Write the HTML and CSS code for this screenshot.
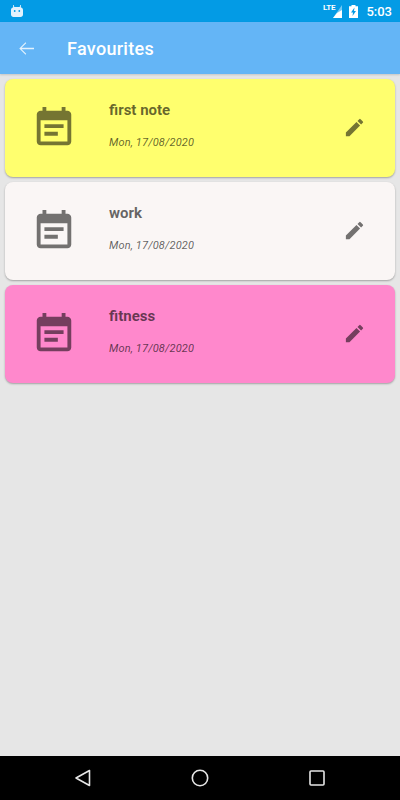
FILE: index.html
```html
<!DOCTYPE html>
<html lang="en">
<head>
<meta charset="utf-8">
<title>Favourites</title>
<link rel="stylesheet" href="styles.css">
</head>
<body>
<div class="screen">
  <div class="status">
    <svg class="status-cat" viewBox="0 0 12 12" width="12" height="12"><path d="M2 0h.7l.6 2h5.400l.6-2H10l-.2 2.200c1.300.4 2.200 1.400 2.200 2.800v4.500C12 11 11 12 9.500 12h-7C1 12 0 11 0 9.500V5c0-1.400.9-2.400 2.200-2.800z" fill="#e3f2fd"/><circle cx="3.700" cy="6" r=".9" fill="#039be5"/><circle cx="8.300" cy="6" r=".9" fill="#039be5"/></svg>
    <div class="status-right">
      <span class="lte">LTE</span>
      <svg class="signal" viewBox="0 0 9 13" width="9" height="13"><path d="M9 0v13H0z" fill="#fff" opacity=".45"/><path d="M9 5v8H0l4-5z" fill="#fff"/></svg>
      <svg class="battery" viewBox="0 0 9 13" width="9" height="13"><path d="M2.500 0h4v1.200H9V13H0V1.200h2.500z" fill="#fff"/><path d="M5.500 2.500 2 7.500h2l-.5 3.500L7 6H5z" fill="#039be5"/></svg>
      <span class="time">5:03</span>
    </div>
  </div>
  <header class="appbar">
    <svg class="back" viewBox="0 0 16 16" width="15" height="15"><path d="M16 7.300H2.700l5-5L7 1.300.3 8 7 14.700l.7-1-5-5H16z" fill="#e3f2fd"/></svg>
    <h1 class="title">Favourites</h1>
  </header>
  <main class="list">
    <article class="card yellow">
      <svg class="note-icon" viewBox="0 0 24 24"><path d="M17 10H7v2h10v-2zm2-7h-1V1h-2v2H8V1H6v2H5c-1.110 0-1.990.9-1.990 2L3 19c0 1.100.89 2 2 2h14c1.100 0 2-.9 2-2V5c0-1.100-.9-2-2-2zm0 16H5V8h14v11zm-5-5H7v2h7v-2z"/></svg>
      <div class="text"><h2 class="name">first note</h2><p class="date">Mon, 17/08/2020</p></div>
      <svg class="edit" viewBox="0 0 24 24"><path d="M3 17.250V21h3.750L17.810 9.940l-3.750-3.750L3 17.250zM20.710 7.040a1 1 0 0 0 0-1.410l-2.340-2.340a1 1 0 0 0-1.410 0l-1.830 1.830 3.750 3.750 1.830-1.830z"/></svg>
    </article>
    <article class="card white">
      <svg class="note-icon" viewBox="0 0 24 24"><path d="M17 10H7v2h10v-2zm2-7h-1V1h-2v2H8V1H6v2H5c-1.110 0-1.990.9-1.990 2L3 19c0 1.100.89 2 2 2h14c1.100 0 2-.9 2-2V5c0-1.100-.9-2-2-2zm0 16H5V8h14v11zm-5-5H7v2h7v-2z"/></svg>
      <div class="text"><h2 class="name">work</h2><p class="date">Mon, 17/08/2020</p></div>
      <svg class="edit" viewBox="0 0 24 24"><path d="M3 17.250V21h3.750L17.810 9.940l-3.750-3.750L3 17.250zM20.710 7.040a1 1 0 0 0 0-1.410l-2.340-2.340a1 1 0 0 0-1.410 0l-1.830 1.830 3.750 3.750 1.830-1.830z"/></svg>
    </article>
    <article class="card pink">
      <svg class="note-icon" viewBox="0 0 24 24"><path d="M17 10H7v2h10v-2zm2-7h-1V1h-2v2H8V1H6v2H5c-1.110 0-1.990.9-1.990 2L3 19c0 1.100.89 2 2 2h14c1.100 0 2-.9 2-2V5c0-1.100-.9-2-2-2zm0 16H5V8h14v11zm-5-5H7v2h7v-2z"/></svg>
      <div class="text"><h2 class="name">fitness</h2><p class="date">Mon, 17/08/2020</p></div>
      <svg class="edit" viewBox="0 0 24 24"><path d="M3 17.250V21h3.750L17.810 9.940l-3.750-3.750L3 17.250zM20.710 7.040a1 1 0 0 0 0-1.410l-2.340-2.340a1 1 0 0 0-1.410 0l-1.830 1.830 3.750 3.750 1.830-1.830z"/></svg>
    </article>
  </main>
  <nav class="navbar">
    <svg viewBox="0 0 18 18" width="18" height="18"><path d="M15.500 1.500v15L2 9z" fill="none" stroke="#e6e6e6" stroke-width="1.600" stroke-linejoin="round"/></svg>
    <svg viewBox="0 0 18 18" width="18" height="18"><circle cx="9" cy="9" r="7.700" fill="none" stroke="#e6e6e6" stroke-width="1.600"/></svg>
    <svg viewBox="0 0 18 18" width="18" height="18"><rect x="2" y="2" width="14" height="14" rx="1" fill="none" stroke="#e6e6e6" stroke-width="1.600"/></svg>
  </nav>
</div>
</body>
</html>
```
FILE: styles.css
```css
* { box-sizing: border-box; }
html, body { margin: 0; padding: 0; }
body { font-family: Roboto, sans-serif; background: #e6e6e6; }
.screen { width: 400px; height: 800px; display: flex; flex-direction: column; overflow: hidden; }
.status { height: 22px; background: #039be5; display: flex; align-items: center; justify-content: space-between; padding: 0 8px 0 11px; color: #fff; }
.status-right { display: flex; align-items: center; }
.lte { font-size: 8px; line-height: 8px; font-weight: 700; margin: -6px -2px 0 0; letter-spacing: -.2px; }
.signal { margin-right: 7px; }
.battery { margin-right: 8px; }
.time { font-size: 13px; font-weight: 500; }
.appbar { height: 52px; background: #64b5f6; display: flex; align-items: center; padding-left: 19px; box-shadow: 0 1px 2px rgba(0,0,0,.15); }
.title { margin: 0 0 0 33px; font-size: 18px; font-weight: 500; letter-spacing: .3px; color: #fff; }
.list { flex: 1; padding: 5px 5px 0; display: flex; flex-direction: column; gap: 5px; }
.card { height: 98px; border-radius: 8px; display: flex; align-items: center; padding-left: 26px; padding-right: 29px; box-shadow: 0 1px 2px rgba(0,0,0,.3); }
.yellow { background: #ffff6e; }
.white { background: #faf6f5; }
.pink { background: #ff88cc; }
.note-icon { width: 46px; height: 46px; flex: none; fill: rgba(0,0,0,.54); }
.text { flex: 1; margin-left: 32px; padding-bottom: 3px; }
.name { margin: 0; font-size: 15px; line-height: 20px; font-weight: 700; color: rgba(0,0,0,.6); }
.date { margin: 13px 0 0; font-size: 11px; line-height: 20px; font-style: italic; letter-spacing: .15px; color: rgba(0,0,0,.62); }
.edit { width: 23px; height: 23px; flex: none; margin-bottom: 1px; fill: rgba(0,0,0,.54); }
.navbar { height: 44px; background: #000; display: flex; align-items: center; justify-content: space-between; padding: 0 74px; }
```
